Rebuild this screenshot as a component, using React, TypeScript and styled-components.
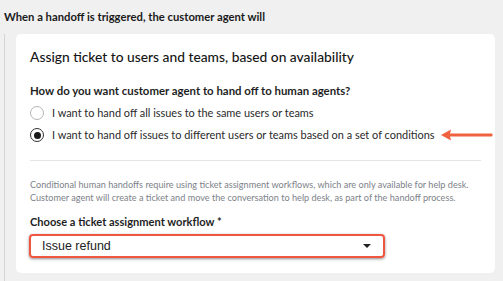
import styled, { createGlobalStyle } from 'styled-components';

const GlobalStyle = createGlobalStyle`
  html, body {
    margin: 0;
    padding: 0;
    background: #f0f0f0;
  }
  body {
    width: 503px;
    height: 281px;
    overflow: hidden;
    font-family: Lato, "Noto Sans", sans-serif;
    color: #1f1f1f;
  }
`;

const Page = styled.div`
  padding: 10px 0 0 4px;
`;

const Heading = styled.div`
  font-size: 11.25px;
  font-weight: 700;
  line-height: 14px;
  color: #1a1a1a;
`;

const Branch = styled.div`
  margin-top: 10px;
  border-left: 1px solid #d4d4d4;
  padding-left: 11px;
  padding-bottom: 8px;
  width: 479px;
`;

const Card = styled.div`
  background: #ffffff;
  border-radius: 5px;
  padding: 14px 14px 15px 14px;
  display: flex;
  flex-direction: column;
`;

const CardTitle = styled.div`
  font-size: 13.8px;
  font-weight: 500;
  line-height: 18px;
  color: #151515;
`;

const Question = styled.div`
  margin-top: 18px;
  font-size: 11.4px;
  font-weight: 700;
  line-height: 14px;
`;

const Options = styled.div`
  margin-top: 8px;
  display: flex;
  flex-direction: column;
  gap: 8px;
`;

const Option = styled.label`
  display: flex;
  align-items: center;
  gap: 8px;
  font-size: 10.95px;
  line-height: 14px;
  color: #2a2a2a;
  white-space: nowrap;
`;

const Radio = styled.span<{ $checked?: boolean }>`
  flex: none;
  width: 14px;
  height: 14px;
  border-radius: 50%;
  border: 1px solid ${p => (p.$checked ? '#333' : '#b5b5b5')};
  box-sizing: border-box;
  display: flex;
  align-items: center;
  justify-content: center;
  &::after {
    content: '';
    width: 7px;
    height: 7px;
    border-radius: 50%;
    background: #1a1a1a;
    display: ${p => (p.$checked ? 'block' : 'none')};
  }
`;

const Arrow = styled.svg`
  margin-left: -4px;
  flex: none;
`;

const Divider = styled.hr`
  border: none;
  border-top: 1px solid #e6e6e6;
  margin: 18px 0 17px 0;
  width: 451px;
`;

const HelpText = styled.p`
  margin: 0;
  font-size: 9.15px;
  line-height: 13px;
  color: #7d8289;
  white-space: nowrap;
`;

const FieldLabel = styled.div`
  margin-top: 11px;
  font-size: 11.1px;
  font-weight: 700;
  line-height: 14px;
`;

const Select = styled.div`
  margin-top: 5px;
  width: 356px;
  height: 24px;
  box-sizing: border-box;
  margin-left: -1px;
  border: 2.5px solid #f0553f;
  border-radius: 4px;
  box-shadow: 0 1px 3px rgba(0, 0, 0, 0.45);
  display: flex;
  align-items: center;
  justify-content: space-between;
  padding: 0 12px 0 11px;
  font-family: "Liberation Sans", Arial, sans-serif;
  font-size: 12.5px;
  color: #222;
`;

const Caret = styled.span`
  width: 0;
  height: 0;
  border-left: 4px solid transparent;
  border-right: 4px solid transparent;
  border-top: 4px solid #222;
`;

export default function App() {
  return (
    <>
      <GlobalStyle />
      <Page>
        <Heading>When a handoff is triggered, the customer agent will</Heading>
        <Branch>
          <Card>
            <CardTitle>Assign ticket to users and teams, based on availability</CardTitle>
            <Question>How do you want customer agent to hand off to human agents?</Question>
            <Options>
              <Option>
                <Radio />
                I want to hand off all issues to the same users or teams
              </Option>
              <Option>
                <Radio $checked />
                I want to hand off issues to different users or teams based on a set of conditions
                <Arrow width="56" height="14" viewBox="0 0 56 14">
                  <path d="M2 7 L12 1.5 L11 5.6 L53 5.6 Q54.5 7 53 8.4 L11 8.4 L12 12.5 Z" fill="#f0613f" />
                </Arrow>
              </Option>
            </Options>
            <Divider />
            <HelpText>
              Conditional human handoffs require using ticket assignment workflows, which are only available for help desk.
              <br />
              Customer agent will create a ticket and move the conversation to help desk, as part of the handoff process.
            </HelpText>
            <FieldLabel>Choose a ticket assignment workflow *</FieldLabel>
            <Select>
              Issue refund
              <Caret />
            </Select>
          </Card>
        </Branch>
      </Page>
    </>
  );
}
